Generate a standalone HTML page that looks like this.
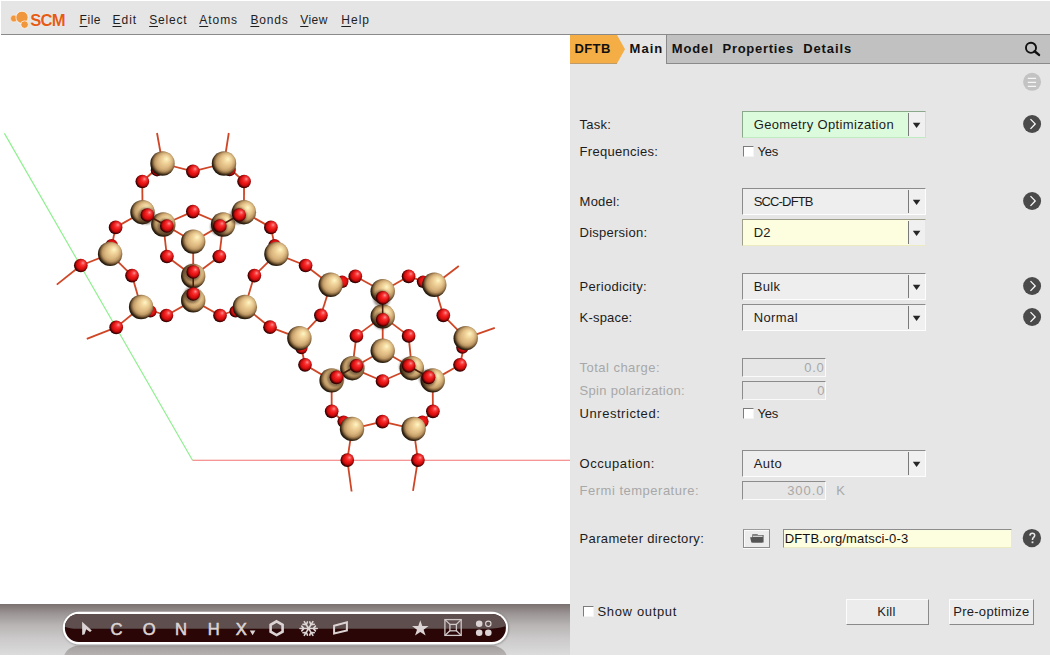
<!DOCTYPE html>
<html><head><meta charset="utf-8">
<style>
*{box-sizing:border-box;margin:0;padding:0}
html,body{width:1050px;height:655px;overflow:hidden;background:#fff;font-family:"Liberation Sans",sans-serif;color:#1e1e1e}
.a{position:absolute}
.combo{position:absolute;width:184px;height:27px;background:#eeeeee;border-top:1px solid #8c8c8c;border-left:1px solid #8c8c8c;border-right:1px solid #fdfdfd;border-bottom:1px solid #fdfdfd}
.sep{position:absolute;left:165px;top:1px;width:1px;height:23px;background:#7a7a7a}
.ar{position:absolute;left:166px;top:0;width:16px;height:25px;background:#f0f0f0}
.ar:after{content:"";position:absolute;left:0;top:0;width:16px;height:25px;background:#262626;clip-path:polygon(3.8px 10.8px,11.4px 10.8px,7.6px 15.9px)}
.inp{position:absolute;width:84px;height:19px;background:#e6e6e6;border-top:1px solid #8c8c8c;border-left:1px solid #8c8c8c;border-right:1px solid #fafafa;border-bottom:1px solid #fafafa}
.cb{position:absolute;width:11px;height:11px;background:#fff;border-top:1px solid #7c7c7c;border-left:1px solid #7c7c7c;border-right:1px solid #f4f4f4;border-bottom:1px solid #f4f4f4}
.circ{position:absolute;width:19px;height:19px;border-radius:50%;background:#4b4b4b}
.btn{position:absolute;background:#ececec;border-top:1px solid #fcfcfc;border-left:1px solid #fcfcfc;border-right:1px solid #8a8a8a;border-bottom:1px solid #8a8a8a}
</style></head>
<body>

<div class="a" style="left:1px;top:1px;width:1049px;height:34px;background:#e5e5e5;border-bottom:1px solid #8a8a8a"></div>
<svg class="a" style="left:0;top:0" width="70" height="34" viewBox="0 0 70 34">
<circle cx="13.9" cy="18.5" r="3.4" fill="#f0963c" stroke="#fff" stroke-width="0.5"/>
<circle cx="22" cy="17.3" r="6.1" fill="#f0963c" stroke="#fff" stroke-width="0.7"/>
<circle cx="24.6" cy="24.6" r="3.8" fill="#f0963c" stroke="#fff" stroke-width="0.7"/>
</svg>
<div class="a" style="left:30.20px;top:10.55px;font-size:16.6px;line-height:19px;font-weight:700;color:#e45c14;letter-spacing:-0.80px;white-space:pre;text-shadow:0 0 1px #fff">SCM</div>
<div class="a" style="left:79.60px;top:12.64px;font-size:12px;line-height:14px;font-weight:400;color:#1e1e1e;letter-spacing:0.53px;white-space:pre;"><span style="text-decoration:underline;text-underline-offset:2px;text-decoration-thickness:1px">F</span>ile</div>
<div class="a" style="left:112.50px;top:12.64px;font-size:12px;line-height:14px;font-weight:400;color:#1e1e1e;letter-spacing:1.00px;white-space:pre;"><span style="text-decoration:underline;text-underline-offset:2px;text-decoration-thickness:1px">E</span>dit</div>
<div class="a" style="left:149.20px;top:12.64px;font-size:12px;line-height:14px;font-weight:400;color:#1e1e1e;letter-spacing:0.82px;white-space:pre;"><span style="text-decoration:underline;text-underline-offset:2px;text-decoration-thickness:1px">S</span>elect</div>
<div class="a" style="left:199.30px;top:12.64px;font-size:12px;line-height:14px;font-weight:400;color:#1e1e1e;letter-spacing:0.95px;white-space:pre;"><span style="text-decoration:underline;text-underline-offset:2px;text-decoration-thickness:1px">A</span>toms</div>
<div class="a" style="left:250.40px;top:12.64px;font-size:12px;line-height:14px;font-weight:400;color:#1e1e1e;letter-spacing:0.85px;white-space:pre;"><span style="text-decoration:underline;text-underline-offset:2px;text-decoration-thickness:1px">B</span>onds</div>
<div class="a" style="left:300.20px;top:12.64px;font-size:12px;line-height:14px;font-weight:400;color:#1e1e1e;letter-spacing:0.47px;white-space:pre;"><span style="text-decoration:underline;text-underline-offset:2px;text-decoration-thickness:1px">V</span>iew</div>
<div class="a" style="left:341.30px;top:12.64px;font-size:12px;line-height:14px;font-weight:400;color:#1e1e1e;letter-spacing:1.00px;white-space:pre;"><span style="text-decoration:underline;text-underline-offset:2px;text-decoration-thickness:1px">H</span>elp</div>
<div class="a" style="left:0;top:35px;width:570px;height:620px;background:#fff;overflow:hidden">
<svg class="a" style="left:0;top:0" width="570" height="620" viewBox="0 35 570 620">
<defs>
<radialGradient id="gs" cx="0.56" cy="0.44" r="0.6">
<stop offset="0" stop-color="#eaca90"/><stop offset="0.42" stop-color="#dcb880"/><stop offset="0.62" stop-color="#c09a66"/><stop offset="0.74" stop-color="#8a6a42"/><stop offset="0.86" stop-color="#3c2a14"/><stop offset="1" stop-color="#0c0602"/>
</radialGradient>
<radialGradient id="hs" cx="0.66" cy="0.32" r="0.36">
<stop offset="0" stop-color="#fff8c8" stop-opacity="1"/><stop offset="0.45" stop-color="#fae2a8" stop-opacity="0.6"/><stop offset="1" stop-color="#f0d098" stop-opacity="0"/>
</radialGradient>
<radialGradient id="go" cx="0.56" cy="0.44" r="0.6">
<stop offset="0" stop-color="#f42020"/><stop offset="0.42" stop-color="#e81414"/><stop offset="0.62" stop-color="#c40c0c"/><stop offset="0.74" stop-color="#8a0404"/><stop offset="0.86" stop-color="#400000"/><stop offset="1" stop-color="#100000"/>
</radialGradient>
<radialGradient id="ho" cx="0.66" cy="0.32" r="0.36">
<stop offset="0" stop-color="#ff9a9a" stop-opacity="1"/><stop offset="0.45" stop-color="#ff5050" stop-opacity="0.55"/><stop offset="1" stop-color="#ff3030" stop-opacity="0"/>
</radialGradient>
<filter id="blur1" x="-50%" y="-50%" width="200%" height="200%"><feGaussianBlur stdDeviation="1.1"/></filter>
</defs>
<line x1="4.4" y1="133.4" x2="192.5" y2="460.3" stroke="#8cf08c" stroke-width="1.15"/>
<line x1="192.5" y1="460.3" x2="570" y2="460.3" stroke="#f27272" stroke-width="1.05"/>
<line x1="162.5" y1="163.5" x2="192.9" y2="171.4" stroke="#cf4626" stroke-width="1.8"/>
<line x1="224.0" y1="163.5" x2="192.9" y2="171.4" stroke="#cf4626" stroke-width="1.8"/>
<line x1="162.5" y1="163.5" x2="142.3" y2="181.5" stroke="#cf4626" stroke-width="1.8"/>
<line x1="224.0" y1="163.5" x2="244.1" y2="181.5" stroke="#cf4626" stroke-width="1.8"/>
<line x1="162.5" y1="163.5" x2="157.0" y2="133.0" stroke="#cf4626" stroke-width="1.8"/>
<line x1="224.0" y1="163.5" x2="228.8" y2="133.0" stroke="#cf4626" stroke-width="1.8"/>
<line x1="142.3" y1="181.5" x2="142.5" y2="212.2" stroke="#cf4626" stroke-width="1.8"/>
<line x1="244.1" y1="181.5" x2="243.9" y2="212.2" stroke="#cf4626" stroke-width="1.8"/>
<line x1="142.5" y1="212.2" x2="115.6" y2="227.4" stroke="#cf4626" stroke-width="1.8"/>
<line x1="243.9" y1="212.2" x2="270.9" y2="227.4" stroke="#cf4626" stroke-width="1.8"/>
<line x1="115.6" y1="227.4" x2="110.1" y2="253.9" stroke="#cf4626" stroke-width="1.8"/>
<line x1="270.9" y1="227.4" x2="276.4" y2="253.9" stroke="#cf4626" stroke-width="1.8"/>
<line x1="110.1" y1="253.9" x2="80.8" y2="265.5" stroke="#cf4626" stroke-width="1.8"/>
<line x1="276.4" y1="253.9" x2="305.6" y2="265.5" stroke="#cf4626" stroke-width="1.8"/>
<line x1="80.8" y1="265.5" x2="56.8" y2="284.6" stroke="#cf4626" stroke-width="1.8"/>
<line x1="305.6" y1="265.5" x2="330.6" y2="284.8" stroke="#cf4626" stroke-width="1.8"/>
<line x1="110.1" y1="253.9" x2="132.0" y2="275.6" stroke="#cf4626" stroke-width="1.8"/>
<line x1="276.4" y1="253.9" x2="254.4" y2="275.6" stroke="#cf4626" stroke-width="1.8"/>
<line x1="132.0" y1="275.6" x2="141.1" y2="307.0" stroke="#cf4626" stroke-width="1.8"/>
<line x1="254.4" y1="275.6" x2="244.9" y2="307.0" stroke="#cf4626" stroke-width="1.8"/>
<line x1="141.1" y1="307.0" x2="116.2" y2="327.4" stroke="#cf4626" stroke-width="1.8"/>
<line x1="244.9" y1="307.0" x2="270.0" y2="327.2" stroke="#cf4626" stroke-width="1.8"/>
<line x1="116.2" y1="327.4" x2="86.8" y2="338.8" stroke="#cf4626" stroke-width="1.8"/>
<line x1="270.0" y1="327.2" x2="299.4" y2="338.2" stroke="#cf4626" stroke-width="1.8"/>
<line x1="141.1" y1="307.0" x2="166.4" y2="315.5" stroke="#cf4626" stroke-width="1.8"/>
<line x1="244.9" y1="307.0" x2="220.0" y2="315.5" stroke="#cf4626" stroke-width="1.8"/>
<line x1="166.4" y1="315.5" x2="193.2" y2="300.4" stroke="#cf4626" stroke-width="1.8"/>
<line x1="220.0" y1="315.5" x2="193.2" y2="300.4" stroke="#cf4626" stroke-width="1.8"/>
<line x1="166.9" y1="256.5" x2="163.3" y2="224.5" stroke="#cf4626" stroke-width="1.8"/>
<line x1="219.3" y1="256.5" x2="223.1" y2="224.5" stroke="#cf4626" stroke-width="1.8"/>
<line x1="166.9" y1="256.5" x2="193.2" y2="276.0" stroke="#cf4626" stroke-width="1.8"/>
<line x1="219.3" y1="256.5" x2="193.2" y2="276.0" stroke="#cf4626" stroke-width="1.8"/>
<line x1="192.8" y1="211.6" x2="163.3" y2="224.5" stroke="#cf4626" stroke-width="1.8"/>
<line x1="192.8" y1="211.6" x2="223.1" y2="224.5" stroke="#cf4626" stroke-width="1.8"/>
<line x1="193.2" y1="241.6" x2="166.8" y2="226.0" stroke="#cf4626" stroke-width="1.8"/>
<line x1="193.2" y1="241.6" x2="219.8" y2="226.0" stroke="#cf4626" stroke-width="1.8"/>
<line x1="193.2" y1="241.6" x2="193.2" y2="272.0" stroke="#cf4626" stroke-width="1.8"/>
<line x1="142.5" y1="212.2" x2="147.3" y2="215.0" stroke="#cf4626" stroke-width="1.8"/>
<line x1="243.9" y1="212.2" x2="239.1" y2="215.0" stroke="#cf4626" stroke-width="1.8"/>
<line x1="330.6" y1="284.8" x2="355.3" y2="276.3" stroke="#cf4626" stroke-width="1.8"/>
<line x1="355.3" y1="276.3" x2="382.7" y2="291.2" stroke="#cf4626" stroke-width="1.8"/>
<line x1="382.7" y1="291.2" x2="408.6" y2="276.3" stroke="#cf4626" stroke-width="1.8"/>
<line x1="408.6" y1="276.3" x2="434.3" y2="284.8" stroke="#cf4626" stroke-width="1.8"/>
<line x1="434.3" y1="284.8" x2="458.8" y2="266.0" stroke="#cf4626" stroke-width="1.8"/>
<line x1="434.3" y1="284.8" x2="443.3" y2="315.3" stroke="#cf4626" stroke-width="1.8"/>
<line x1="443.3" y1="315.3" x2="465.7" y2="338.2" stroke="#cf4626" stroke-width="1.8"/>
<line x1="465.7" y1="338.2" x2="494.8" y2="327.9" stroke="#cf4626" stroke-width="1.8"/>
<line x1="465.7" y1="338.2" x2="460.0" y2="364.8" stroke="#cf4626" stroke-width="1.8"/>
<line x1="460.0" y1="364.8" x2="432.7" y2="380.4" stroke="#cf4626" stroke-width="1.8"/>
<line x1="330.6" y1="284.8" x2="320.9" y2="315.3" stroke="#cf4626" stroke-width="1.8"/>
<line x1="320.9" y1="315.3" x2="299.4" y2="338.2" stroke="#cf4626" stroke-width="1.8"/>
<line x1="299.4" y1="338.2" x2="305.0" y2="364.8" stroke="#cf4626" stroke-width="1.8"/>
<line x1="305.0" y1="364.8" x2="331.6" y2="380.4" stroke="#cf4626" stroke-width="1.8"/>
<line x1="382.7" y1="316.4" x2="356.4" y2="335.9" stroke="#cf4626" stroke-width="1.8"/>
<line x1="382.7" y1="316.4" x2="408.6" y2="335.9" stroke="#cf4626" stroke-width="1.8"/>
<line x1="356.4" y1="335.9" x2="352.3" y2="368.2" stroke="#cf4626" stroke-width="1.8"/>
<line x1="408.6" y1="335.9" x2="411.8" y2="368.2" stroke="#cf4626" stroke-width="1.8"/>
<line x1="382.7" y1="350.8" x2="382.7" y2="319.8" stroke="#cf4626" stroke-width="1.8"/>
<line x1="382.7" y1="350.8" x2="356.4" y2="365.8" stroke="#cf4626" stroke-width="1.8"/>
<line x1="382.7" y1="350.8" x2="408.6" y2="365.8" stroke="#cf4626" stroke-width="1.8"/>
<line x1="352.3" y1="368.2" x2="382.5" y2="381.0" stroke="#cf4626" stroke-width="1.8"/>
<line x1="411.8" y1="368.2" x2="382.5" y2="381.0" stroke="#cf4626" stroke-width="1.8"/>
<line x1="331.6" y1="380.4" x2="331.7" y2="411.3" stroke="#cf4626" stroke-width="1.8"/>
<line x1="432.7" y1="380.4" x2="432.9" y2="411.3" stroke="#cf4626" stroke-width="1.8"/>
<line x1="331.7" y1="411.3" x2="352.0" y2="428.9" stroke="#cf4626" stroke-width="1.8"/>
<line x1="432.9" y1="411.3" x2="413.6" y2="428.9" stroke="#cf4626" stroke-width="1.8"/>
<line x1="352.0" y1="428.9" x2="382.4" y2="421.6" stroke="#cf4626" stroke-width="1.8"/>
<line x1="382.4" y1="421.6" x2="413.6" y2="428.9" stroke="#cf4626" stroke-width="1.8"/>
<line x1="352.0" y1="428.9" x2="347.3" y2="460.1" stroke="#cf4626" stroke-width="1.8"/>
<line x1="413.6" y1="428.9" x2="417.9" y2="460.1" stroke="#cf4626" stroke-width="1.8"/>
<line x1="347.3" y1="460.1" x2="351.6" y2="491.5" stroke="#cf4626" stroke-width="1.8"/>
<line x1="417.9" y1="460.1" x2="413.0" y2="490.9" stroke="#cf4626" stroke-width="1.8"/>
<line x1="331.6" y1="380.4" x2="336.4" y2="377.3" stroke="#cf4626" stroke-width="1.8"/>
<line x1="432.7" y1="380.4" x2="428.5" y2="377.3" stroke="#cf4626" stroke-width="1.8"/>
<circle cx="274.6" cy="245.2" r="6.2" fill="url(#go)"/>
<circle cx="111.6" cy="245.2" r="6.2" fill="url(#go)"/>
<circle cx="157.0" cy="170.2" r="6.2" fill="url(#go)"/>
<circle cx="229.6" cy="170.0" r="6.2" fill="url(#go)"/>
<circle cx="150.4" cy="311.4" r="6.2" fill="url(#go)"/>
<circle cx="235.6" cy="311.4" r="6.2" fill="url(#go)"/>
<circle cx="342.2" cy="281.8" r="6.2" fill="url(#go)"/>
<circle cx="423.0" cy="281.8" r="6.2" fill="url(#go)"/>
<circle cx="462.4" cy="347.6" r="6.2" fill="url(#go)"/>
<circle cx="301.4" cy="348.0" r="6.2" fill="url(#go)"/>
<circle cx="343.6" cy="421.6" r="6.2" fill="url(#go)"/>
<circle cx="422.4" cy="421.6" r="6.2" fill="url(#go)"/>
<circle cx="162.5" cy="163.5" r="12.2" fill="url(#gs)"/><circle cx="162.5" cy="163.5" r="12.2" fill="url(#hs)"/>
<circle cx="224.0" cy="163.5" r="12.2" fill="url(#gs)"/><circle cx="224.0" cy="163.5" r="12.2" fill="url(#hs)"/>
<circle cx="142.5" cy="212.2" r="12.2" fill="url(#gs)"/><circle cx="142.5" cy="212.2" r="12.2" fill="url(#hs)"/>
<circle cx="243.9" cy="212.2" r="12.2" fill="url(#gs)"/><circle cx="243.9" cy="212.2" r="12.2" fill="url(#hs)"/>
<circle cx="163.3" cy="224.5" r="12.2" fill="url(#gs)"/><circle cx="163.3" cy="224.5" r="12.2" fill="url(#hs)"/>
<circle cx="223.1" cy="224.5" r="12.2" fill="url(#gs)"/><circle cx="223.1" cy="224.5" r="12.2" fill="url(#hs)"/>
<circle cx="193.2" cy="241.6" r="12.2" fill="url(#gs)"/><circle cx="193.2" cy="241.6" r="12.2" fill="url(#hs)"/>
<circle cx="110.1" cy="253.9" r="12.2" fill="url(#gs)"/><circle cx="110.1" cy="253.9" r="12.2" fill="url(#hs)"/>
<circle cx="276.4" cy="253.9" r="12.2" fill="url(#gs)"/><circle cx="276.4" cy="253.9" r="12.2" fill="url(#hs)"/>
<circle cx="193.2" cy="276.0" r="12.2" fill="url(#gs)"/><circle cx="193.2" cy="276.0" r="12.2" fill="url(#hs)"/>
<circle cx="193.2" cy="300.4" r="12.2" fill="url(#gs)"/><circle cx="193.2" cy="300.4" r="12.2" fill="url(#hs)"/>
<circle cx="141.1" cy="307.0" r="12.2" fill="url(#gs)"/><circle cx="141.1" cy="307.0" r="12.2" fill="url(#hs)"/>
<circle cx="244.9" cy="307.0" r="12.2" fill="url(#gs)"/><circle cx="244.9" cy="307.0" r="12.2" fill="url(#hs)"/>
<circle cx="330.6" cy="284.8" r="12.2" fill="url(#gs)"/><circle cx="330.6" cy="284.8" r="12.2" fill="url(#hs)"/>
<circle cx="382.7" cy="291.2" r="12.2" fill="url(#gs)"/><circle cx="382.7" cy="291.2" r="12.2" fill="url(#hs)"/>
<circle cx="434.3" cy="284.8" r="12.2" fill="url(#gs)"/><circle cx="434.3" cy="284.8" r="12.2" fill="url(#hs)"/>
<circle cx="382.7" cy="316.4" r="12.2" fill="url(#gs)"/><circle cx="382.7" cy="316.4" r="12.2" fill="url(#hs)"/>
<circle cx="299.4" cy="338.2" r="12.2" fill="url(#gs)"/><circle cx="299.4" cy="338.2" r="12.2" fill="url(#hs)"/>
<circle cx="465.7" cy="338.2" r="12.2" fill="url(#gs)"/><circle cx="465.7" cy="338.2" r="12.2" fill="url(#hs)"/>
<circle cx="382.7" cy="350.8" r="12.2" fill="url(#gs)"/><circle cx="382.7" cy="350.8" r="12.2" fill="url(#hs)"/>
<circle cx="352.3" cy="368.2" r="12.2" fill="url(#gs)"/><circle cx="352.3" cy="368.2" r="12.2" fill="url(#hs)"/>
<circle cx="411.8" cy="368.2" r="12.2" fill="url(#gs)"/><circle cx="411.8" cy="368.2" r="12.2" fill="url(#hs)"/>
<circle cx="331.6" cy="380.4" r="12.2" fill="url(#gs)"/><circle cx="331.6" cy="380.4" r="12.2" fill="url(#hs)"/>
<circle cx="432.7" cy="380.4" r="12.2" fill="url(#gs)"/><circle cx="432.7" cy="380.4" r="12.2" fill="url(#hs)"/>
<circle cx="352.0" cy="428.9" r="12.2" fill="url(#gs)"/><circle cx="352.0" cy="428.9" r="12.2" fill="url(#hs)"/>
<circle cx="413.6" cy="428.9" r="12.2" fill="url(#gs)"/><circle cx="413.6" cy="428.9" r="12.2" fill="url(#hs)"/>
<line x1="147.3" y1="215.0" x2="166.8" y2="226.0" stroke="#4a2010" stroke-width="1.6"/>
<line x1="239.1" y1="215.0" x2="219.8" y2="226.0" stroke="#4a2010" stroke-width="1.6"/>
<line x1="193.2" y1="272.0" x2="193.2" y2="294.0" stroke="#4a2010" stroke-width="1.6"/>
<line x1="382.6" y1="297.8" x2="382.7" y2="319.8" stroke="#4a2010" stroke-width="1.6"/>
<line x1="356.4" y1="365.8" x2="336.4" y2="377.3" stroke="#4a2010" stroke-width="1.6"/>
<line x1="408.6" y1="365.8" x2="428.5" y2="377.3" stroke="#4a2010" stroke-width="1.6"/>
<circle cx="146.4" cy="215.9" r="8.45" fill="#2a1808" opacity="0.5" filter="url(#blur1)"/>
<circle cx="238.2" cy="215.9" r="8.45" fill="#2a1808" opacity="0.5" filter="url(#blur1)"/>
<circle cx="165.9" cy="226.9" r="8.45" fill="#2a1808" opacity="0.5" filter="url(#blur1)"/>
<circle cx="218.9" cy="226.9" r="8.45" fill="#2a1808" opacity="0.5" filter="url(#blur1)"/>
<circle cx="192.29999999999998" cy="272.9" r="8.45" fill="#2a1808" opacity="0.5" filter="url(#blur1)"/>
<circle cx="192.29999999999998" cy="294.9" r="8.45" fill="#2a1808" opacity="0.5" filter="url(#blur1)"/>
<circle cx="381.70000000000005" cy="298.7" r="8.45" fill="#2a1808" opacity="0.5" filter="url(#blur1)"/>
<circle cx="381.8" cy="320.7" r="8.45" fill="#2a1808" opacity="0.5" filter="url(#blur1)"/>
<circle cx="355.5" cy="366.7" r="8.45" fill="#2a1808" opacity="0.5" filter="url(#blur1)"/>
<circle cx="407.70000000000005" cy="366.7" r="8.45" fill="#2a1808" opacity="0.5" filter="url(#blur1)"/>
<circle cx="335.5" cy="378.2" r="8.45" fill="#2a1808" opacity="0.5" filter="url(#blur1)"/>
<circle cx="427.6" cy="378.2" r="8.45" fill="#2a1808" opacity="0.5" filter="url(#blur1)"/>
<circle cx="192.9" cy="171.4" r="6.85" fill="url(#go)"/><circle cx="192.9" cy="171.4" r="6.85" fill="url(#ho)"/>
<circle cx="142.3" cy="181.5" r="6.85" fill="url(#go)"/><circle cx="142.3" cy="181.5" r="6.85" fill="url(#ho)"/>
<circle cx="244.1" cy="181.5" r="6.85" fill="url(#go)"/><circle cx="244.1" cy="181.5" r="6.85" fill="url(#ho)"/>
<circle cx="192.8" cy="211.6" r="6.85" fill="url(#go)"/><circle cx="192.8" cy="211.6" r="6.85" fill="url(#ho)"/>
<circle cx="147.3" cy="215.0" r="6.85" fill="url(#go)"/><circle cx="147.3" cy="215.0" r="6.85" fill="url(#ho)"/>
<circle cx="239.1" cy="215.0" r="6.85" fill="url(#go)"/><circle cx="239.1" cy="215.0" r="6.85" fill="url(#ho)"/>
<circle cx="166.8" cy="226.0" r="6.85" fill="url(#go)"/><circle cx="166.8" cy="226.0" r="6.85" fill="url(#ho)"/>
<circle cx="219.8" cy="226.0" r="6.85" fill="url(#go)"/><circle cx="219.8" cy="226.0" r="6.85" fill="url(#ho)"/>
<circle cx="115.6" cy="227.4" r="6.85" fill="url(#go)"/><circle cx="115.6" cy="227.4" r="6.85" fill="url(#ho)"/>
<circle cx="270.9" cy="227.4" r="6.85" fill="url(#go)"/><circle cx="270.9" cy="227.4" r="6.85" fill="url(#ho)"/>
<circle cx="166.9" cy="256.5" r="6.85" fill="url(#go)"/><circle cx="166.9" cy="256.5" r="6.85" fill="url(#ho)"/>
<circle cx="219.3" cy="256.5" r="6.85" fill="url(#go)"/><circle cx="219.3" cy="256.5" r="6.85" fill="url(#ho)"/>
<circle cx="80.8" cy="265.5" r="6.85" fill="url(#go)"/><circle cx="80.8" cy="265.5" r="6.85" fill="url(#ho)"/>
<circle cx="305.6" cy="265.5" r="6.85" fill="url(#go)"/><circle cx="305.6" cy="265.5" r="6.85" fill="url(#ho)"/>
<circle cx="193.2" cy="272.0" r="6.85" fill="url(#go)"/><circle cx="193.2" cy="272.0" r="6.85" fill="url(#ho)"/>
<circle cx="132.0" cy="275.6" r="6.85" fill="url(#go)"/><circle cx="132.0" cy="275.6" r="6.85" fill="url(#ho)"/>
<circle cx="254.4" cy="275.6" r="6.85" fill="url(#go)"/><circle cx="254.4" cy="275.6" r="6.85" fill="url(#ho)"/>
<circle cx="193.2" cy="294.0" r="6.85" fill="url(#go)"/><circle cx="193.2" cy="294.0" r="6.85" fill="url(#ho)"/>
<circle cx="166.4" cy="315.5" r="6.85" fill="url(#go)"/><circle cx="166.4" cy="315.5" r="6.85" fill="url(#ho)"/>
<circle cx="220.0" cy="315.5" r="6.85" fill="url(#go)"/><circle cx="220.0" cy="315.5" r="6.85" fill="url(#ho)"/>
<circle cx="116.2" cy="327.4" r="6.85" fill="url(#go)"/><circle cx="116.2" cy="327.4" r="6.85" fill="url(#ho)"/>
<circle cx="270.0" cy="327.2" r="6.85" fill="url(#go)"/><circle cx="270.0" cy="327.2" r="6.85" fill="url(#ho)"/>
<circle cx="355.3" cy="276.3" r="6.85" fill="url(#go)"/><circle cx="355.3" cy="276.3" r="6.85" fill="url(#ho)"/>
<circle cx="408.6" cy="276.3" r="6.85" fill="url(#go)"/><circle cx="408.6" cy="276.3" r="6.85" fill="url(#ho)"/>
<circle cx="382.6" cy="297.8" r="6.85" fill="url(#go)"/><circle cx="382.6" cy="297.8" r="6.85" fill="url(#ho)"/>
<circle cx="382.7" cy="319.8" r="6.85" fill="url(#go)"/><circle cx="382.7" cy="319.8" r="6.85" fill="url(#ho)"/>
<circle cx="320.9" cy="315.3" r="6.85" fill="url(#go)"/><circle cx="320.9" cy="315.3" r="6.85" fill="url(#ho)"/>
<circle cx="443.3" cy="315.3" r="6.85" fill="url(#go)"/><circle cx="443.3" cy="315.3" r="6.85" fill="url(#ho)"/>
<circle cx="356.4" cy="335.9" r="6.85" fill="url(#go)"/><circle cx="356.4" cy="335.9" r="6.85" fill="url(#ho)"/>
<circle cx="408.6" cy="335.9" r="6.85" fill="url(#go)"/><circle cx="408.6" cy="335.9" r="6.85" fill="url(#ho)"/>
<circle cx="305.0" cy="364.8" r="6.85" fill="url(#go)"/><circle cx="305.0" cy="364.8" r="6.85" fill="url(#ho)"/>
<circle cx="460.0" cy="364.8" r="6.85" fill="url(#go)"/><circle cx="460.0" cy="364.8" r="6.85" fill="url(#ho)"/>
<circle cx="356.4" cy="365.8" r="6.85" fill="url(#go)"/><circle cx="356.4" cy="365.8" r="6.85" fill="url(#ho)"/>
<circle cx="408.6" cy="365.8" r="6.85" fill="url(#go)"/><circle cx="408.6" cy="365.8" r="6.85" fill="url(#ho)"/>
<circle cx="336.4" cy="377.3" r="6.85" fill="url(#go)"/><circle cx="336.4" cy="377.3" r="6.85" fill="url(#ho)"/>
<circle cx="428.5" cy="377.3" r="6.85" fill="url(#go)"/><circle cx="428.5" cy="377.3" r="6.85" fill="url(#ho)"/>
<circle cx="382.5" cy="381.0" r="6.85" fill="url(#go)"/><circle cx="382.5" cy="381.0" r="6.85" fill="url(#ho)"/>
<circle cx="331.7" cy="411.3" r="6.85" fill="url(#go)"/><circle cx="331.7" cy="411.3" r="6.85" fill="url(#ho)"/>
<circle cx="432.9" cy="411.3" r="6.85" fill="url(#go)"/><circle cx="432.9" cy="411.3" r="6.85" fill="url(#ho)"/>
<circle cx="382.4" cy="421.6" r="6.85" fill="url(#go)"/><circle cx="382.4" cy="421.6" r="6.85" fill="url(#ho)"/>
<circle cx="347.3" cy="460.1" r="6.85" fill="url(#go)"/><circle cx="347.3" cy="460.1" r="6.85" fill="url(#ho)"/>
<circle cx="417.9" cy="460.1" r="6.85" fill="url(#go)"/><circle cx="417.9" cy="460.1" r="6.85" fill="url(#ho)"/>
</svg>
</div>
<div class="a" style="left:570px;top:35px;width:480px;height:620px;background:#e6e6e6"></div>
<div class="a" style="left:570px;top:35px;width:480px;height:29px;background:#c1c1c1;border-bottom:1px solid #8a8a8a"></div>
<svg class="a" style="left:570px;top:35px" width="110" height="29" viewBox="0 0 110 29">
<rect x="47" y="0" width="49" height="29" fill="#e6e6e6"/>
<polygon points="0,0 47,0 55,14.2 47,28.4 0,28.4" fill="#f4ae45"/>
<rect x="96" y="0" width="1" height="28" fill="#8a8a8a"/>
</svg>
<div class="a" style="left:574.40px;top:40.80px;font-size:13px;line-height:15px;font-weight:700;color:#111;letter-spacing:0.43px;white-space:pre;">DFTB</div>
<div class="a" style="left:629.60px;top:40.80px;font-size:13px;line-height:15px;font-weight:700;color:#111;letter-spacing:1.00px;white-space:pre;">Main</div>
<div class="a" style="left:671.70px;top:40.80px;font-size:13px;line-height:15px;font-weight:700;color:#111;letter-spacing:0.90px;white-space:pre;">Model</div>
<div class="a" style="left:722.50px;top:40.80px;font-size:13px;line-height:15px;font-weight:700;color:#111;letter-spacing:0.72px;white-space:pre;">Properties</div>
<div class="a" style="left:803.20px;top:40.80px;font-size:13px;line-height:15px;font-weight:700;color:#111;letter-spacing:0.90px;white-space:pre;">Details</div>
<svg class="a" style="left:1020px;top:38px" width="24" height="24" viewBox="0 0 24 24">
<circle cx="11.0" cy="9.8" r="5.05" fill="none" stroke="#111" stroke-width="1.9"/>
<line x1="14.6" y1="13.3" x2="19.0" y2="16.9" stroke="#111" stroke-width="2.5" stroke-linecap="round"/>
</svg>
<svg class="a" style="left:1021px;top:71px" width="22" height="22" viewBox="0 0 22 22">
<circle cx="11.1" cy="10.8" r="9" fill="#c3c3c3"/>
<path d="M6.8 7.4H15.1M6.8 11.4H15.1M6.8 15.4H15.1" stroke="#f6f6f6" stroke-width="1.1"/>
</svg>
<div class="a" style="left:579.60px;top:117.30px;font-size:13px;line-height:15px;font-weight:400;color:#1c1c1c;letter-spacing:0.25px;white-space:pre;">Task:</div>
<div class="combo" style="left:742px;top:111px;background:#dcfbdc;border-right-color:#c0eac0;border-bottom-color:#c0eac0;border-top-color:#8aa88a;border-left-color:#8aa88a"><div class="sep"></div><div class="ar"></div></div>
<div class="a" style="left:753.70px;top:117.20px;font-size:13px;line-height:15px;font-weight:400;color:#1c1c1c;letter-spacing:0.35px;white-space:pre;">Geometry Optimization</div>
<svg class="a" style="left:1021px;top:113.0px" width="22" height="22" viewBox="0 0 22 22">
<circle cx="11.1" cy="11" r="9" fill="#4a4a4a"/>
<path d="M9.5 6.1L14.2 10.9L9.5 15.9" fill="none" stroke="#fafafa" stroke-width="1.35"/>
</svg>
<div class="a" style="left:579.60px;top:143.60px;font-size:13px;line-height:15px;font-weight:400;color:#1c1c1c;letter-spacing:0.29px;white-space:pre;">Frequencies:</div>
<div class="cb" style="left:743px;top:146px"></div>
<div class="a" style="left:757.40px;top:143.60px;font-size:13px;line-height:15px;font-weight:400;color:#1c1c1c;letter-spacing:-0.20px;white-space:pre;">Yes</div>
<div class="a" style="left:579.60px;top:194.10px;font-size:13px;line-height:15px;font-weight:400;color:#1c1c1c;letter-spacing:0.22px;white-space:pre;">Model:</div>
<div class="combo" style="left:742px;top:188px;background:#eeeeee;border-right-color:#fdfdfd;border-bottom-color:#fdfdfd;border-top-color:#8c8c8c;border-left-color:#8c8c8c"><div class="sep"></div><div class="ar"></div></div>
<div class="a" style="left:753.70px;top:194.20px;font-size:13px;line-height:15px;font-weight:400;color:#1c1c1c;letter-spacing:-0.84px;white-space:pre;">SCC-DFTB</div>
<svg class="a" style="left:1021px;top:190.0px" width="22" height="22" viewBox="0 0 22 22">
<circle cx="11.1" cy="11" r="9" fill="#4a4a4a"/>
<path d="M9.5 6.1L14.2 10.9L9.5 15.9" fill="none" stroke="#fafafa" stroke-width="1.35"/>
</svg>
<div class="a" style="left:579.60px;top:225.40px;font-size:13px;line-height:15px;font-weight:400;color:#1c1c1c;letter-spacing:0.24px;white-space:pre;">Dispersion:</div>
<div class="combo" style="left:742px;top:219px;background:#fdfde0;border-right-color:#ebeac0;border-bottom-color:#ebeac0;border-top-color:#a0a08a;border-left-color:#a0a08a"><div class="sep"></div><div class="ar"></div></div>
<div class="a" style="left:753.70px;top:225.20px;font-size:13px;line-height:15px;font-weight:400;color:#1c1c1c;letter-spacing:0.20px;white-space:pre;">D2</div>
<div class="a" style="left:579.60px;top:279.10px;font-size:13px;line-height:15px;font-weight:400;color:#1c1c1c;letter-spacing:0.31px;white-space:pre;">Periodicity:</div>
<div class="combo" style="left:742px;top:273px;background:#eeeeee;border-right-color:#fdfdfd;border-bottom-color:#fdfdfd;border-top-color:#8c8c8c;border-left-color:#8c8c8c"><div class="sep"></div><div class="ar"></div></div>
<div class="a" style="left:753.70px;top:279.20px;font-size:13px;line-height:15px;font-weight:400;color:#1c1c1c;letter-spacing:0.30px;white-space:pre;">Bulk</div>
<svg class="a" style="left:1021px;top:275.0px" width="22" height="22" viewBox="0 0 22 22">
<circle cx="11.1" cy="11" r="9" fill="#4a4a4a"/>
<path d="M9.5 6.1L14.2 10.9L9.5 15.9" fill="none" stroke="#fafafa" stroke-width="1.35"/>
</svg>
<div class="a" style="left:579.60px;top:310.40px;font-size:13px;line-height:15px;font-weight:400;color:#1c1c1c;letter-spacing:0.19px;white-space:pre;">K-space:</div>
<div class="combo" style="left:742px;top:304px;background:#eeeeee;border-right-color:#fdfdfd;border-bottom-color:#fdfdfd;border-top-color:#8c8c8c;border-left-color:#8c8c8c"><div class="sep"></div><div class="ar"></div></div>
<div class="a" style="left:753.70px;top:310.20px;font-size:13px;line-height:15px;font-weight:400;color:#1c1c1c;letter-spacing:0.40px;white-space:pre;">Normal</div>
<svg class="a" style="left:1021px;top:306.0px" width="22" height="22" viewBox="0 0 22 22">
<circle cx="11.1" cy="11" r="9" fill="#4a4a4a"/>
<path d="M9.5 6.1L14.2 10.9L9.5 15.9" fill="none" stroke="#fafafa" stroke-width="1.35"/>
</svg>
<div class="a" style="left:579.60px;top:360.20px;font-size:13px;line-height:15px;font-weight:400;color:#a8a8a8;letter-spacing:0.46px;white-space:pre;">Total charge:</div>
<div class="inp" style="left:742px;top:358px"></div>
<div class="a" style="left:624.40px;top:360.20px;font-size:13px;line-height:15px;font-weight:400;color:#a8a8a8;letter-spacing:0.65px;white-space:pre;width:200px;text-align:right">0.0</div>
<div class="a" style="left:579.60px;top:383.00px;font-size:13px;line-height:15px;font-weight:400;color:#a8a8a8;letter-spacing:0.31px;white-space:pre;">Spin polarization:</div>
<div class="inp" style="left:742px;top:381px"></div>
<div class="a" style="left:624.40px;top:383.20px;font-size:13px;line-height:15px;font-weight:400;color:#a8a8a8;letter-spacing:0.00px;white-space:pre;width:200px;text-align:right">0</div>
<div class="a" style="left:579.60px;top:406.00px;font-size:13px;line-height:15px;font-weight:400;color:#1c1c1c;letter-spacing:0.54px;white-space:pre;">Unrestricted:</div>
<div class="cb" style="left:743px;top:408px"></div>
<div class="a" style="left:757.40px;top:406.00px;font-size:13px;line-height:15px;font-weight:400;color:#1c1c1c;letter-spacing:-0.20px;white-space:pre;">Yes</div>
<div class="a" style="left:579.60px;top:456.30px;font-size:13px;line-height:15px;font-weight:400;color:#1c1c1c;letter-spacing:0.54px;white-space:pre;">Occupation:</div>
<div class="combo" style="left:742px;top:450px;background:#eeeeee;border-right-color:#fdfdfd;border-bottom-color:#fdfdfd;border-top-color:#8c8c8c;border-left-color:#8c8c8c"><div class="sep"></div><div class="ar"></div></div>
<div class="a" style="left:753.70px;top:456.20px;font-size:13px;line-height:15px;font-weight:400;color:#1c1c1c;letter-spacing:0.47px;white-space:pre;">Auto</div>
<div class="a" style="left:579.60px;top:483.10px;font-size:13px;line-height:15px;font-weight:400;color:#a8a8a8;letter-spacing:0.50px;white-space:pre;">Fermi temperature:</div>
<div class="inp" style="left:742px;top:481px"></div>
<div class="a" style="left:624.40px;top:483.20px;font-size:13px;line-height:15px;font-weight:400;color:#a8a8a8;letter-spacing:0.93px;white-space:pre;width:200px;text-align:right">300.0</div>
<div class="a" style="left:836.30px;top:483.10px;font-size:13px;line-height:15px;font-weight:400;color:#a8a8a8;letter-spacing:0.00px;white-space:pre;">K</div>
<div class="a" style="left:579.60px;top:531.00px;font-size:13px;line-height:15px;font-weight:400;color:#1c1c1c;letter-spacing:0.34px;white-space:pre;">Parameter directory:</div>
<div class="a" style="left:743px;top:529px;width:27px;height:19px;background:#ececec;border:1px solid #8c8c8c;border-top-color:#9c9c9c;box-shadow:inset 1px 1px 0 #fbfbfb,0 1px 0 #fafafa"></div>
<svg class="a" style="left:743px;top:529px" width="27" height="19" viewBox="0 0 27 19">
<path d="M9.3 5.2H14.4L15.1 6H20.6V13.6H9.3Z" fill="#5c5c5c"/>
<path d="M10 6.6H19.6V8H10Z" fill="#d0d0d0"/>
<path d="M7.1 8.3H19.5L19.4 13.6H8.4Z" fill="#555"/>
</svg>
<div class="a" style="left:783px;top:529px;width:229px;height:19px;background:#fdfde0;border-top:1px solid #8c8c8c;border-left:1px solid #8c8c8c;border-right:1px solid #ebeac0;border-bottom:1px solid #ebeac0"></div>
<div class="a" style="left:784.70px;top:530.80px;font-size:13px;line-height:15px;font-weight:400;color:#111;letter-spacing:0.16px;white-space:pre;">DFTB.org/matsci-0-3</div>
<svg class="a" style="left:1021px;top:527px" width="22" height="22" viewBox="0 0 22 22">
<circle cx="10.9" cy="11.1" r="9.2" fill="#4a4a4a"/>
<path d="M8.9 8.6C9 7 10.1 6.3 11.3 6.3C12.7 6.3 13.7 7.2 13.7 8.5C13.7 10.3 11.5 10.5 11.5 12.4V13.1" fill="none" stroke="#e6e6e6" stroke-width="1.5"/><rect x="10.6" y="14.4" width="1.8" height="1.8" fill="#e6e6e6"/>
</svg>
<div class="cb" style="left:583px;top:606px"></div>
<div class="a" style="left:597.50px;top:604.00px;font-size:13px;line-height:15px;font-weight:400;color:#1c1c1c;letter-spacing:0.65px;white-space:pre;">Show output</div>
<div class="btn" style="left:846px;top:599px;width:83px;height:26px"></div>
<div class="a" style="left:877.20px;top:604.00px;font-size:13px;line-height:15px;font-weight:400;color:#1c1c1c;letter-spacing:0.27px;white-space:pre;">Kill</div>
<div class="btn" style="left:949px;top:599px;width:85px;height:26px"></div>
<div class="a" style="left:953.20px;top:604.00px;font-size:13px;line-height:15px;font-weight:400;color:#1c1c1c;letter-spacing:0.28px;white-space:pre;">Pre-optimize</div>

<div class="a" style="left:0;top:604px;width:570px;height:51px;background:linear-gradient(to bottom,#7a7070 0px,#9a9393 9px,#b8b4b4 21px,#cccaca 35px,#dcdcdc 51px)"></div>
<svg class="a" style="left:0;top:604px" width="570" height="51" viewBox="0 604 570 51">
<defs>
<linearGradient id="refl" x1="0" y1="0" x2="0" y2="1">
<stop offset="0" stop-color="#9c9696"/><stop offset="0.4" stop-color="#b4b0b0"/><stop offset="1" stop-color="#d4d2d2"/>
</linearGradient>
<clipPath id="pillclip"><rect x="64.9" y="613.9" width="441" height="28.1" rx="14"/></clipPath>
<filter id="pshadow" x="-5%" y="-30%" width="110%" height="160%"><feDropShadow dx="0.5" dy="0.8" stdDeviation="1.2" flood-color="#000" flood-opacity="0.35"/></filter>
</defs>
<rect x="63" y="645.4" width="445" height="32" rx="16" fill="url(#refl)" opacity="0.85"/>
<rect x="62.8" y="611.7" width="445.2" height="32.5" rx="16.2" fill="#ffffff" filter="url(#pshadow)"/>
<g clip-path="url(#pillclip)">
<rect x="60" y="610" width="450" height="40" fill="#2a0606"/>
<path d="M60 610H510V624.5C503 627.5 497 628.8 488 628.8H78C70 628.8 66 627.5 60 624.8Z" fill="#5e4e4e"/>
</g>
<polygon points="82.1,621.8 91.8,630.5 90,632.1 86.2,629.2 84.6,634.3 82.2,635" fill="#dcd4d4"/>
<g font-family="Liberation Sans" font-size="16.6" fill="#dcd4d4" stroke="#dcd4d4" stroke-width="0.55" text-anchor="middle">
<text x="116.4" y="634.9">C</text>
<text x="149.1" y="634.9">O</text>
<text x="181" y="634.9">N</text>
<text x="213.8" y="634.9">H</text>
<text x="241.4" y="634.9">X</text>
</g>
<path d="M249.8 630.6H255.4L252.6 635.2Z" fill="#dcd4d4"/>
<polygon points="276.6,621.3 282.6,624.75 282.6,631.65 276.6,635.1 270.6,631.65 270.6,624.75" fill="none" stroke="#dcd4d4" stroke-width="2.6"/>
<g stroke="#dcd4d4" stroke-width="1.6" fill="none" stroke-linecap="round" transform="translate(308.6,628.5)"><path d="M0 0L8.60 0.00M4.60 0.00L6.79 -2.40M4.60 0.00L6.79 2.40M0 0L4.30 6.85M2.30 3.67L5.65 4.21M2.30 3.67L1.14 6.60M0 0L-4.30 6.85M-2.30 3.67L-1.14 6.60M-2.30 3.67L-5.65 4.21M0 0L-8.60 0.00M-4.60 0.00L-6.79 2.40M-4.60 0.00L-6.79 -2.40M0 0L-4.30 -6.85M-2.30 -3.67L-5.65 -4.21M-2.30 -3.67L-1.14 -6.60M0 0L4.30 -6.85M2.30 -3.67L1.14 -6.60M2.30 -3.67L5.65 -4.21"/><circle r="1.6" fill="#dcd4d4" stroke="none"/></g>
<polygon points="334.1,625.8 346.9,622.2 346.9,630.4 334.1,633.4" fill="none" stroke="#dcd4d4" stroke-width="2"/>
<polygon points="420.3,620.3 422.3,626.1 428.6,626.0 423.6,629.8 425.6,635.6 420.3,632.0 415.0,635.6 417.0,629.8 412.0,626.0 418.3,626.1" fill="#dcd4d4"/>
<g stroke="#cfc7c7" stroke-width="1.3" fill="none">
<rect x="444.9" y="619.6" width="16.3" height="15.8"/>
<rect x="449.9" y="624.4" width="6.5" height="6.4"/>
<path d="M444.9 619.6L449.9 624.4M461.2 619.6L456.4 624.4M444.9 635.4L449.9 630.8M461.2 635.4L456.4 630.8"/>
</g>
<circle cx="479.2" cy="623.8" r="3.3" fill="#dcd4d4"/>
<circle cx="488.3" cy="623.8" r="2.7" fill="none" stroke="#dcd4d4" stroke-width="1.1"/>
<circle cx="479.2" cy="632.7" r="3.3" fill="#dcd4d4"/>
<circle cx="488.3" cy="632.7" r="3.3" fill="#dcd4d4"/>
</svg>

</body></html>
